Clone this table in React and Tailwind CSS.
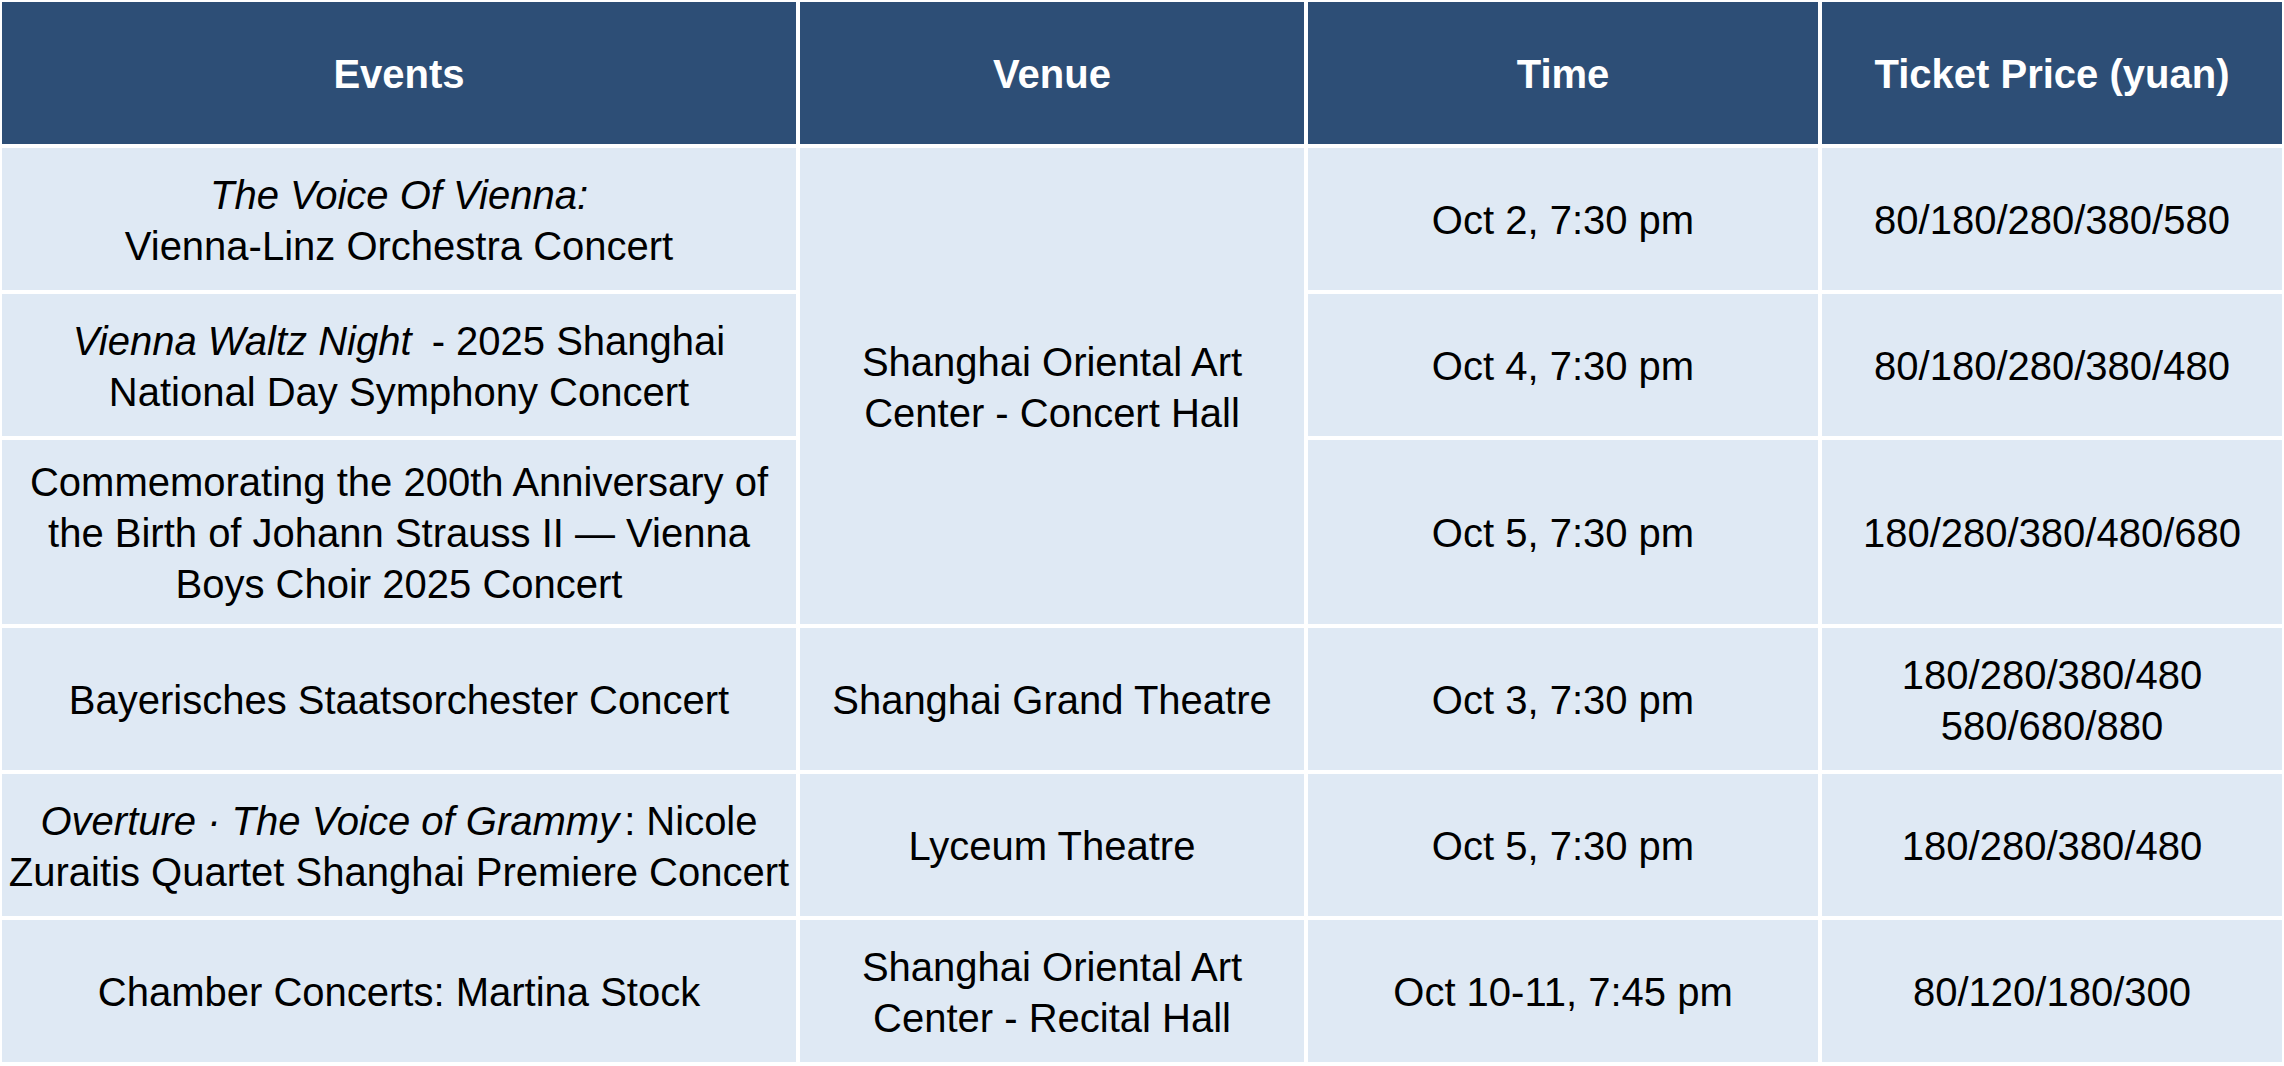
const cellCls =
  "flex items-center justify-center pt-[3px] text-center whitespace-nowrap bg-[#dfe9f4] text-black";

function Cell({ className = "", children }) {
  return (
    <div className={`${cellCls} ${className}`}>
      <span>{children}</span>
    </div>
  );
}

export default function App() {
  return (
    <div
      className="grid w-[2284px] grid-cols-[794px_504px_510px_460px] grid-rows-[142px_142px_142px_184px_142px_142px_142px] gap-1 bg-white p-[2px] text-[40px] leading-[51px]"
      style={{ fontFamily: '"Liberation Sans", Arial, sans-serif' }}
    >
      {["Events", "Venue", "Time", "Ticket Price (yuan)"].map((h) => (
        <div
          key={h}
          className="flex items-center justify-center bg-[#2d4e76] pt-[3px] font-bold text-white whitespace-nowrap"
        >
          {h}
        </div>
      ))}

      {/* Oriental Art Center block, venue spans three rows */}
      <Cell className="col-start-1 row-start-2">
        <i>The Voice Of Vienna:</i>
        <br />
        Vienna-Linz Orchestra Concert
      </Cell>
      <Cell className="col-start-2 row-start-2 row-span-3">
        Shanghai Oriental Art
        <br />
        Center - Concert Hall
      </Cell>
      <Cell className="col-start-3 row-start-2">Oct 2, 7:30 pm</Cell>
      <Cell className="col-start-4 row-start-2">80/180/280/380/580</Cell>

      <Cell className="col-start-1 row-start-3">
        <i>Vienna Waltz Night</i>
        <span className="ml-[9px]"> - 2025 Shanghai</span>
        <br />
        National Day Symphony Concert
      </Cell>
      <Cell className="col-start-3 row-start-3">Oct 4, 7:30 pm</Cell>
      <Cell className="col-start-4 row-start-3">80/180/280/380/480</Cell>

      <Cell className="col-start-1 row-start-4">
        Commemorating the 200th Anniversary of
        <br />
        the Birth of Johann Strauss II — Vienna
        <br />
        Boys Choir 2025 Concert
      </Cell>
      <Cell className="col-start-3 row-start-4">Oct 5, 7:30 pm</Cell>
      <Cell className="col-start-4 row-start-4">180/280/380/480/680</Cell>

      <Cell>Bayerisches Staatsorchester Concert</Cell>
      <Cell>Shanghai Grand Theatre</Cell>
      <Cell>Oct 3, 7:30 pm</Cell>
      <Cell>
        180/280/380/480
        <br />
        580/680/880
      </Cell>

      <Cell>
        <i>Overture · The Voice of Grammy</i>
        <span className="ml-[5px]">: Nicole</span>
        <br />
        Zuraitis Quartet Shanghai Premiere Concert
      </Cell>
      <Cell>Lyceum Theatre</Cell>
      <Cell>Oct 5, 7:30 pm</Cell>
      <Cell>180/280/380/480</Cell>

      <Cell>Chamber Concerts: Martina Stock</Cell>
      <Cell>
        Shanghai Oriental Art
        <br />
        Center - Recital Hall
      </Cell>
      <Cell>Oct 10-11, 7:45 pm</Cell>
      <Cell>80/120/180/300</Cell>
    </div>
  );
}
